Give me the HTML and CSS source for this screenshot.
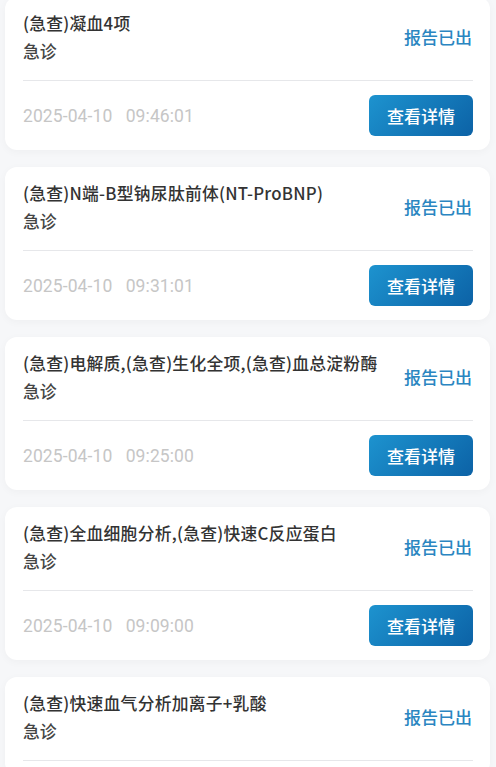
FILE: index.html
```html
<!DOCTYPE html>
<html lang="zh">
<head>
<meta charset="utf-8">
<link rel="stylesheet" href="styles.css">
</head>
<body>
<div class="list">
  <div class="card">
    <div class="top">
      <div class="info">
        <div class="title">(急查)凝血4项</div>
        <div class="sub">急诊</div>
      </div>
      <div class="status">报告已出</div>
    </div>
    <div class="bottom">
      <div class="date">2025-04-10&nbsp;&nbsp;&nbsp;09:46:01</div>
      <div class="btn">查看详情</div>
    </div>
  </div>
  <div class="card">
    <div class="top">
      <div class="info">
        <div class="title">(急查)N端-B型钠尿肽前体(NT-ProBNP)</div>
        <div class="sub">急诊</div>
      </div>
      <div class="status">报告已出</div>
    </div>
    <div class="bottom">
      <div class="date">2025-04-10&nbsp;&nbsp;&nbsp;09:31:01</div>
      <div class="btn">查看详情</div>
    </div>
  </div>
  <div class="card">
    <div class="top">
      <div class="info">
        <div class="title">(急查)电解质,(急查)生化全项,(急查)血总淀粉酶</div>
        <div class="sub">急诊</div>
      </div>
      <div class="status">报告已出</div>
    </div>
    <div class="bottom">
      <div class="date">2025-04-10&nbsp;&nbsp;&nbsp;09:25:00</div>
      <div class="btn">查看详情</div>
    </div>
  </div>
  <div class="card">
    <div class="top">
      <div class="info">
        <div class="title">(急查)全血细胞分析,(急查)快速C反应蛋白</div>
        <div class="sub">急诊</div>
      </div>
      <div class="status">报告已出</div>
    </div>
    <div class="bottom">
      <div class="date">2025-04-10&nbsp;&nbsp;&nbsp;09:09:00</div>
      <div class="btn">查看详情</div>
    </div>
  </div>
  <div class="card">
    <div class="top">
      <div class="info">
        <div class="title">(急查)快速血气分析加离子+乳酸</div>
        <div class="sub">急诊</div>
      </div>
      <div class="status">报告已出</div>
    </div>
  </div>
</div>
</body>
</html>
```
FILE: styles.css
```css
html, body {
  margin: 0;
  padding: 0;
  background: #f6f7f9;
  font-family: "Noto Sans CJK SC", "Noto Sans", sans-serif;
  overflow: hidden;
}
.list {
  display: flex;
  flex-direction: column;
  gap: 17px;
  padding: 0 6px 0 5px;
  margin-top: -3px;
}
.card {
  background: #ffffff;
  border-radius: 12px;
  box-shadow: 0 2px 8px rgba(0, 0, 0, 0.035);
  padding: 12px 17px 14px 18px;
}
.top {
  display: flex;
  align-items: center;
  justify-content: space-between;
  padding-bottom: 15px;
  border-bottom: 1px solid #e6e7ea;
}
.title, .sub {
  font-size: 16.8px;
  line-height: 28px;
  color: #333333;
  font-weight: 500;
  white-space: nowrap;
}
.title {
  letter-spacing: 0.25px;
}
.sub {
  color: #444444;
}
.status {
  font-size: 17px;
  color: #2b86c1;
  font-weight: 500;
  line-height: 28px;
  padding-right: 1px;
}
.bottom {
  display: flex;
  align-items: center;
  justify-content: space-between;
  padding-top: 14px;
}
.date {
  font-family: "Roboto", "Noto Sans", sans-serif;
  font-size: 17.5px;
  color: #c6c6c6;
  font-weight: 400;
  letter-spacing: 0.1px;
}
.btn {
  width: 104px;
  height: 41px;
  border-radius: 6px;
  background: linear-gradient(135deg, #1d93cf 0%, #0c62a6 100%);
  color: #ffffff;
  font-size: 17px;
  font-weight: 500;
  display: flex;
  align-items: center;
  justify-content: center;
}
```
